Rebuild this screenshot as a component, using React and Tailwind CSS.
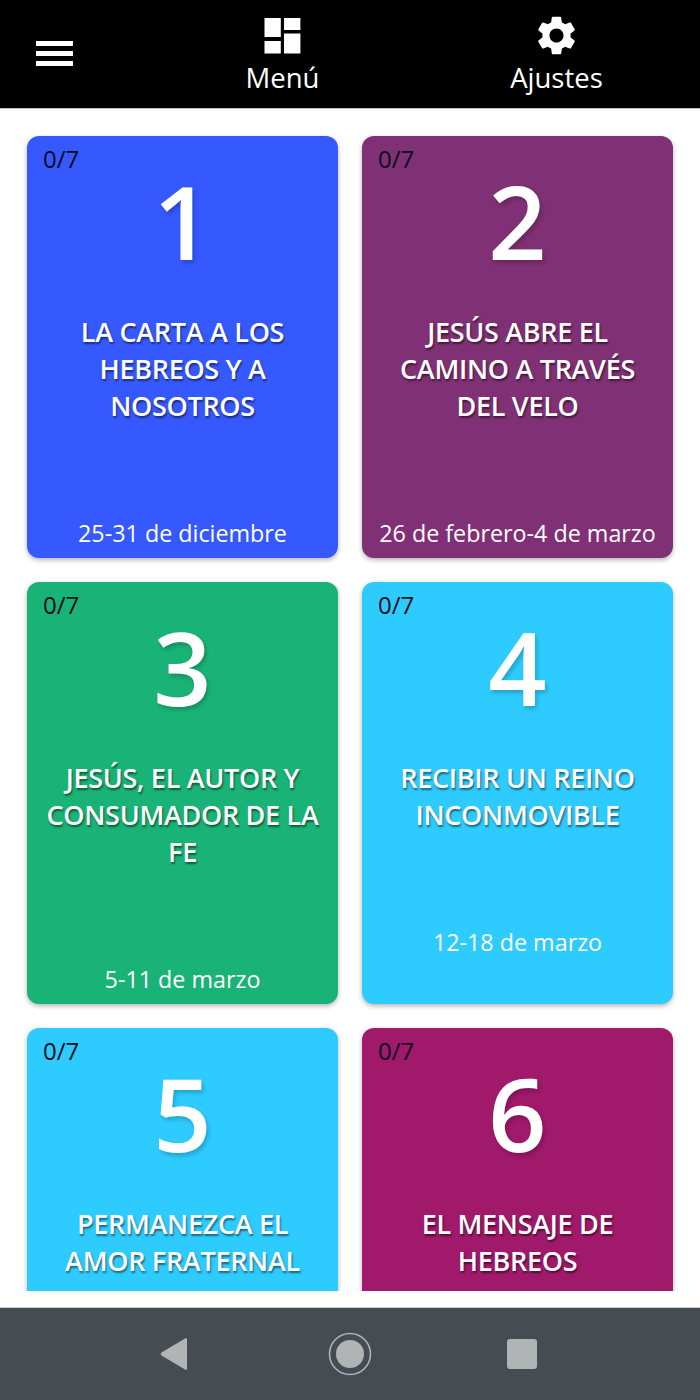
const cards = [
  { n: "1", t: ["LA CARTA A LOS", "HEBREOS Y A", "NOSOTROS"], d: "25-31 de diciembre", c: "bg-[#3559ff]" },
  { n: "2", t: ["JESÚS ABRE EL", "CAMINO A TRAVÉS", "DEL VELO"], d: "26 de febrero-4 de marzo", c: "bg-[#803074]" },
  { n: "3", t: ["JESÚS, EL AUTOR Y", "CONSUMADOR DE LA", "FE"], d: "5-11 de marzo", c: "bg-[#1ab377]" },
  { n: "4", t: ["RECIBIR UN REINO", "INCONMOVIBLE"], d: "12-18 de marzo", c: "bg-[#2ecbff]" },
  { n: "5", t: ["PERMANEZCA EL", "AMOR FRATERNAL"], c: "bg-[#2ecbff]" },
  { n: "6", t: ["EL MENSAJE DE", "HEBREOS"], c: "bg-[#a0196b]" },
];

function Card({ n, t, d, c }) {
  return (
    <div className={`${c} min-h-[422px] rounded-xl px-2 pt-[6px] pb-[9px] text-center text-white shadow-[0_2px_5px_rgba(0,0,0,0.3)]`}>
      <div className="pl-2 text-left text-[24px] leading-[33px] text-[#0b0b20]">0/7</div>
      <div className="mt-[-10px] text-[102px] font-semibold leading-[112px] [text-shadow:2px_3px_4px_rgba(0,0,0,0.2)]">{n}</div>
      <div className="mt-[36px] whitespace-nowrap text-[27px] font-semibold leading-[37px] tracking-[-0.3px] [text-shadow:1px_2px_2px_rgba(0,0,0,0.5)]">
        {t.map((l) => <div key={l}>{l}</div>)}
      </div>
      {d && <div className="mt-[94px] whitespace-nowrap text-[23.3px] leading-[31px]">{d}</div>}
    </div>
  );
}

export default function App() {
  return (
    <div className="flex h-[1400px] w-[700px] flex-col bg-white font-['Open_Sans',sans-serif]">
      <header className="z-10 flex h-[109px] shrink-0 items-start border-b border-[#c4c4c4] bg-black text-white">
        <div className="mt-[41px] ml-[36px] flex w-[37px] flex-col gap-[5px]">
          <div className="h-[5px] bg-white" />
          <div className="h-[5px] bg-white" />
          <div className="h-[5px] bg-white" />
        </div>
        <div className="ml-[173px] flex w-[73px] flex-col items-center pt-[18px]">
          <svg width="37" height="36" viewBox="0 0 37 36" fill="#fff">
            <rect x="0.5" y="0" width="16.3" height="19" />
            <rect x="20" y="0" width="16.4" height="12" />
            <rect x="0.5" y="23" width="16.3" height="12.5" />
            <rect x="20" y="15.5" width="16.4" height="20" />
          </svg>
          <span className="mt-[6px] text-[27.5px] leading-[36px]">Menú</span>
        </div>
        <div className="ml-[191px] flex w-[93px] flex-col items-center pt-[12px]">
          <svg width="47" height="47" viewBox="0 0 24 24" fill="#fff">
            <path d="M19.14 12.94c.04-.3.06-.61.06-.94 0-.32-.02-.64-.07-.94l2.03-1.58a.49.49 0 0 0 .12-.61l-1.92-3.32a.488.488 0 0 0-.59-.22l-2.39.96c-.5-.38-1.03-.7-1.62-.94l-.36-2.54a.484.484 0 0 0-.48-.41h-3.84c-.24 0-.43.17-.47.41l-.36 2.54c-.59.24-1.13.57-1.62.94l-2.39-.96c-.22-.08-.47 0-.59.22L2.74 8.87c-.12.21-.08.47.12.61l2.03 1.58c-.05.3-.09.63-.09.94s.02.64.07.94l-2.03 1.58a.49.49 0 0 0-.12.61l1.92 3.32c.12.22.37.29.59.22l2.39-.96c.5.38 1.03.7 1.62.94l.36 2.54c.05.24.24.41.48.41h3.84c.24 0 .44-.17.47-.41l.36-2.54c.59-.24 1.13-.56 1.62-.94l2.39.96c.22.08.47 0 .59-.22l1.92-3.32c.12-.22.07-.47-.12-.61l-2.01-1.58zM12 15.6c-1.98 0-3.6-1.62-3.6-3.6s1.62-3.6 3.6-3.6 3.6 1.62 3.6 3.6-1.62 3.6-3.6 3.6z" />
          </svg>
          <span className="mt-[1px] text-[27.5px] leading-[36px]">Ajustes</span>
        </div>
      </header>
      <main className="h-[1182px] shrink-0 overflow-hidden">
        <div className="grid grid-cols-2 gap-6 px-[27px] pt-[27px]">
          {cards.map((c) => <Card key={c.n} {...c} />)}
        </div>
      </main>
      <div className="h-4 shrink-0 bg-white" />
      <nav className="relative flex h-[93px] shrink-0 items-center border-t border-[#c9cbcd] bg-[#454c52]">
        <svg className="ml-[158px]" width="32" height="36" viewBox="0 0 32 36" fill="#b0b4b5">
          <path d="M27 2.5c1-.7 2-.2 2 1v29c0 1.2-1 1.7-2 1L3.5 19.5c-1-.8-1-2.2 0-3z" />
        </svg>
        <svg className="ml-[138px]" width="44" height="44" viewBox="0 0 44 44" fill="none">
          <circle cx="22" cy="22" r="20.5" stroke="#b0b4b5" strokeWidth="1.6" />
          <circle cx="22" cy="22" r="14" fill="#b0b4b5" />
        </svg>
        <div className="ml-[135px] h-[30px] w-[30px] rounded-[3px] bg-[#b0b4b5]" />
      </nav>
    </div>
  );
}
